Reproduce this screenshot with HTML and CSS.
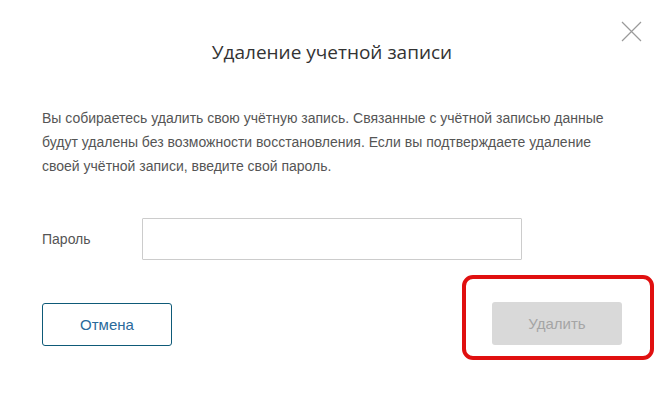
FILE: index.html
```html
<!DOCTYPE html>
<html lang="ru">
<head>
<meta charset="utf-8">
<link rel="stylesheet" href="styles.css">
</head>
<body>
<div class="modal">
  <button class="close" aria-label="Закрыть">
    <svg width="21" height="21" viewBox="0 0 21 21"><path d="M1 1L20 20M20 1L1 20" stroke="#9a9a9a" stroke-width="1.2" fill="none"/></svg>
  </button>
  <h1 class="title">Удаление учетной записи</h1>
  <p class="text">Вы собираетесь удалить свою учётную запись. Связанные с учётной записью данные будут удалены без возможности восстановления. Если вы подтверждаете удаление своей учётной записи, введите свой пароль.</p>
  <div class="field">
    <label class="label">Пароль</label>
    <input class="input" type="password">
  </div>
  <div class="actions">
    <button class="btn btn-cancel">Отмена</button>
    <div class="highlight">
      <button class="btn btn-delete" disabled>Удалить</button>
    </div>
  </div>
</div>
</body>
</html>
```
FILE: styles.css
```css
* { box-sizing: border-box; }
html, body { margin: 0; background: #fff; }
body { width: 668px; height: 416px; overflow: hidden; }
.modal {
  position: relative;
  padding: 36px 0 0 42px;
}
.close {
  position: absolute;
  top: 21px;
  left: 621px;
  width: 21px;
  height: 21px;
  padding: 0;
  border: 0;
  background: none;
  display: block;
}
.close svg { display: block; }
.title {
  margin: 0 0 0 -42px;
  width: 664px;
  text-align: center;
  font-family: "Open Sans", sans-serif;
  font-weight: 400;
  font-size: 19px;
  line-height: 32px;
  color: #333;
}
.text {
  margin: 38px 0 0;
  width: 590px;
  font-family: "Liberation Sans", Arial, sans-serif;
  font-size: 14px;
  line-height: 24px;
  color: #555;
}
.field {
  display: flex;
  align-items: center;
  margin-top: 40px;
}
.label {
  width: 100px;
  font-family: "Liberation Sans", Arial, sans-serif;
  font-size: 14px;
  color: #555;
}
.input {
  width: 380px;
  height: 42px;
  border: 1px solid #ccc;
  border-radius: 1px;
  background: #fff;
  outline: none;
}
.actions {
  display: flex;
  justify-content: space-between;
  align-items: flex-start;
  width: 612px;
  margin-top: 15px;
}
.btn {
  width: 130px;
  height: 43px;
  border-radius: 3px;
  font-family: "Liberation Sans", Arial, sans-serif;
  font-size: 15px;
  padding: 0;
}
.btn-cancel {
  margin-top: 28px;
  border: 1px solid #0e5a78;
  background: #fff;
  color: #2a6a9b;
}
.highlight {
  border: 4px solid #e01010;
  border-radius: 11px;
  padding: 23px 28px 11px 26px;
}
.btn-delete {
  border: 0;
  background: #d9d9d9;
  color: #a5a5a5;
}
```
